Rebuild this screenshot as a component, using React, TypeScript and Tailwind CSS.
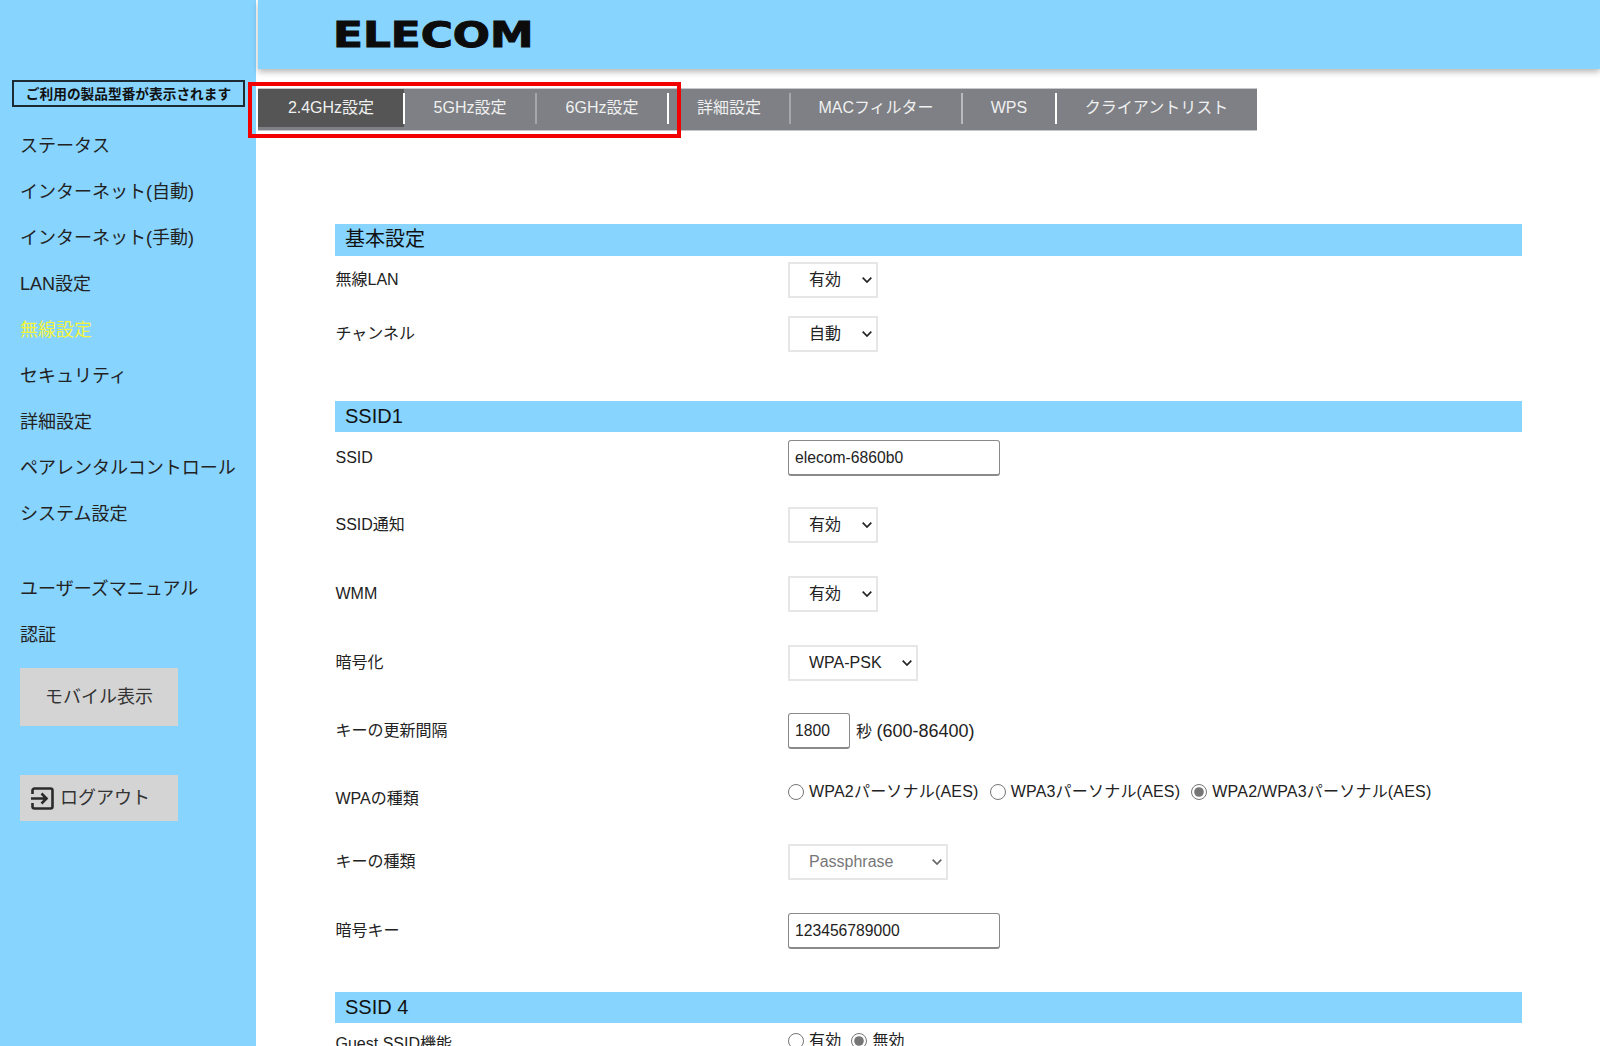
import type { ReactNode } from 'react';

const navTop = ['ステータス', 'インターネット(自動)', 'インターネット(手動)', 'LAN設定', '無線設定', 'セキュリティ', '詳細設定', 'ペアレンタルコントロール', 'システム設定'];
const navBottom = ['ユーザーズマニュアル', '認証'];

const tabs = [
  { label: '2.4GHz設定', width: 'w-[146px]', sep: 'bg-white', active: true },
  { label: '5GHz設定', width: 'w-[132px]', sep: 'bg-[#a4a6aa]', active: false },
  { label: '6GHz設定', width: 'w-[132px]', sep: 'bg-white', active: false },
  { label: '詳細設定', width: 'w-[122px]', sep: 'bg-[#a4a6aa]', active: false },
  { label: 'MACフィルター', width: 'w-[172px]', sep: 'bg-[#b8babd]', active: false },
  { label: 'WPS', width: 'w-[94px]', sep: 'bg-white', active: false },
  { label: 'クライアントリスト', width: 'w-[201px]', sep: '', active: false },
];

function Heading({ children, className }: { children: ReactNode; className: string }) {
  return <h2 className={`bg-[#87d4ff] pl-[10px] text-[20px] leading-[30px] text-[#111] ${className}`}>{children}</h2>;
}

function Row({ label, className, children }: { label: string; className: string; children: ReactNode }) {
  return (
    <div className={`flex items-center ${className}`}>
      <div className="w-[453px] shrink-0 pl-[0.5px] text-[16px] text-[#222]">{label}</div>
      {children}
    </div>
  );
}

function Select({ value, width, disabled }: { value: string; width: string; disabled?: boolean }) {
  return (
    <div className={`relative h-[36px] ${width}`}>
      <select
        defaultValue={value}
        disabled={disabled}
        className={`h-full w-full appearance-none border-2 border-[#e6e6e6] bg-white pb-[1px] pl-[19px] text-[16px] ${disabled ? 'text-[#777]' : 'text-[#222]'}`}
      >
        <option>{value}</option>
      </select>
      <svg
        width="10"
        height="6"
        viewBox="0 0 10 6"
        fill="none"
        stroke={disabled ? '#666' : '#222'}
        strokeWidth="1.7"
        className="pointer-events-none absolute right-[6px] top-[15px]"
      >
        <path d="M0.7 0.7L5 5L9.3 0.7" />
      </svg>
    </div>
  );
}

function TextInput({ value, width }: { value: string; width: string }) {
  return (
    <input
      type="text"
      defaultValue={value}
      className={`h-[36px] ${width} rounded-[3px] border border-b-2 border-[#8a8a8a] bg-white px-[6px] text-[15.7px] text-[#222]`}
    />
  );
}

function Radio({ name, label, checked, className }: { name: string; label: string; checked?: boolean; className?: string }) {
  return (
    <label className={`flex items-center gap-[5px] text-[16px] tracking-[0.2px] text-[#222] ${className ?? ''}`}>
      <input type="radio" name={name} defaultChecked={checked} className="h-[16px] w-[16px] accent-[#767676]" />
      {label}
    </label>
  );
}

export default function App() {
  return (
    <div className="flex h-[1046px] w-[1600px] overflow-hidden bg-white font-['Liberation_Sans','Noto_Sans_CJK_JP',sans-serif]">
      {/* ===== SIDEBAR ===== */}
      <aside className="w-[256px] shrink-0 bg-[#87d4ff] pt-[80px]">
        <div className="ml-[12px] flex h-[27px] w-[233px] items-center justify-center border-2 border-[#1b2a33] pt-[3px] text-[13.7px] font-bold text-[#111]">
          ご利用の製品型番が表示されます
        </div>
        <nav className="mt-[16px] pl-[20px] text-[18px]">
          {navTop.map((item) => (
            <div key={item} className={`flex h-[46px] items-center ${item === '無線設定' ? 'text-[#f4f43c]' : 'text-[#222]'}`}>
              {item}
            </div>
          ))}
          <div className="mt-[29px]">
            {navBottom.map((item) => (
              <div key={item} className="flex h-[46px] items-center text-[#222]">
                {item}
              </div>
            ))}
          </div>
        </nav>
        <div className="ml-[20px] mt-[10px] flex h-[58px] w-[158px] items-center justify-center bg-[#d4d4d4] text-[18px] text-[#333]">
          モバイル表示
        </div>
        <div className="ml-[20px] mt-[49px] flex h-[46px] w-[158px] items-center gap-[6px] bg-[#d4d4d4] pl-[11px] text-[18px] text-[#333]">
          <svg width="23" height="23" viewBox="0 0 23 23" fill="none" stroke="#2b2b2b" strokeWidth="2.6">
            <path d="M1.5 7V3.5a2 2 0 0 1 2-2h16a2 2 0 0 1 2 2v16a2 2 0 0 1-2 2h-16a2 2 0 0 1-2-2V16" />
            <path d="M0 11.5h15M10.5 6.5l5 5-5 5" />
          </svg>
          ログアウト
        </div>
      </aside>

      <main className="ml-[2px] min-w-0 flex-1">
        {/* ===== HEADER ===== */}
        <header className="flex h-[69px] items-center bg-[#87d4ff] pl-[75px] pt-[2px] shadow-[0_3px_6px_rgba(0,0,0,0.28)]">
          <span className="origin-left scale-x-[1.25] font-['DejaVu_Sans',sans-serif] text-[35px] font-bold leading-none text-[#0c0c0c] [-webkit-text-stroke:1px_#0c0c0c]">
            ELECOM
          </span>
        </header>

        {/* ===== TABS ===== */}
        <div className="relative mt-[19px] w-[999px]">
          <div className="flex h-[43px] border-y border-[#c6c7ca] bg-[#7e8085]">
            {tabs.map((tab) => (
              <div
                key={tab.label}
                className={`relative flex items-center justify-center text-[16px] text-[#f0f0f0] ${tab.width} ${tab.active ? 'mb-[3px] bg-[#555555]' : 'pb-[3px]'}`}
              >
                {tab.label}
                {tab.sep && <span className={`absolute -right-[1px] top-[4px] h-[31px] w-[2px] ${tab.sep}`} />}
              </div>
            ))}
          </div>
          <div className="pointer-events-none absolute -left-[10px] -top-[6px] h-[56px] w-[433px] border-4 border-[#f20000]" />
        </div>

        {/* ===== FORM ===== */}
        <section className="mt-[93px] pl-[77px] pr-[78px]">
          <Heading className="h-[32px]">基本設定</Heading>
          <Row label="無線LAN" className="mt-[6px]">
            <Select value="有効" width="w-[90px]" />
          </Row>
          <Row label="チャンネル" className="mt-[18px]">
            <Select value="自動" width="w-[90px]" />
          </Row>

          <Heading className="mt-[49px] h-[31px]">SSID1</Heading>
          <Row label="SSID" className="mt-[8px]">
            <TextInput value="elecom-6860b0" width="w-[212px]" />
          </Row>
          <Row label="SSID通知" className="mt-[31px]">
            <Select value="有効" width="w-[90px]" />
          </Row>
          <Row label="WMM" className="mt-[33px]">
            <Select value="有効" width="w-[90px]" />
          </Row>
          <Row label="暗号化" className="mt-[33px]">
            <Select value="WPA-PSK" width="w-[130px]" />
          </Row>
          <Row label="キーの更新間隔" className="mt-[32px]">
            <TextInput value="1800" width="w-[62px]" />
            <span className="ml-[6px] text-[16px] text-[#222]">
              秒 <span className="text-[18px]">(600-86400)</span>
            </span>
          </Row>
          <Row label="WPAの種類" className="mt-[32px] h-[35px]">
            <div className="-mt-[1px] flex gap-[11px] self-start">
              <Radio name="wpa" label="WPA2パーソナル(AES)" />
              <Radio name="wpa" label="WPA3パーソナル(AES)" />
              <Radio name="wpa" label="WPA2/WPA3パーソナル(AES)" checked />
            </div>
          </Row>
          <Row label="キーの種類" className="mt-[28px]">
            <Select value="Passphrase" width="w-[160px]" disabled />
          </Row>
          <Row label="暗号キー" className="mt-[33px]">
            <TextInput value="123456789000" width="w-[212px]" />
          </Row>

          <Heading className="mt-[43px] h-[31px]">SSID 4</Heading>
          <Row label="Guest SSID機能" className="h-[42px]">
            <div className="mt-[6px] flex gap-[10px] self-start">
              <Radio name="guest" label="有効" />
              <Radio name="guest" label="無効" checked />
            </div>
          </Row>
        </section>
      </main>
    </div>
  );
}
